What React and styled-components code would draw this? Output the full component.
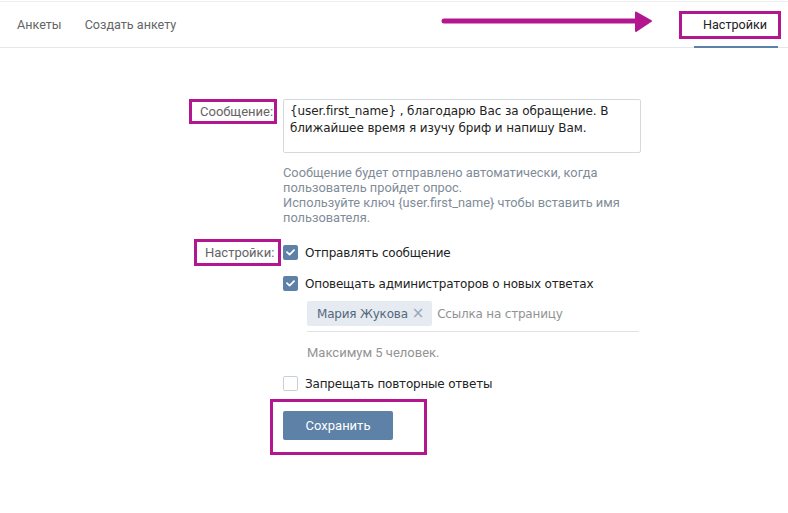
import React from 'react';
import styled, { createGlobalStyle } from 'styled-components';

const GlobalStyle = createGlobalStyle`
  body {
    margin: 0;
    background: #fff;
    font-family: Roboto, "Noto Sans", sans-serif;
    font-size: 13px;
  }
`;

const Page = styled.div`
  position: relative;
  width: 788px;
  height: 513px;
  background: #fff;
  overflow: hidden;
`;

const Header = styled.div`
  margin-top: 1px;
  border-top: 1px solid #eceef1;
  height: 45px;
  border-bottom: 1px solid #e3e6ea;
  display: flex;
  align-items: stretch;
  padding-left: 17px;
  padding-right: 10px;
  font-size: 12.6px;
`;

const Tab = styled.div`
  display: flex;
  align-items: center;
  margin-right: 23px;
  color: ${p => (p.active ? '#222' : '#656565')};
  position: relative;
  ${p => p.active && `
    margin-left: auto;
    margin-right: 0;
    width: 84px;
    &::after {
      content: '';
      position: absolute;
      left: 0;
      right: 0;
      bottom: -1px;
      height: 2px;
      background: #5e81a8;
    }
  `}
`;

const Mark = styled.span`
  display: inline-flex;
  align-items: center;
  flex-shrink: 0;
  border: 3px solid #b3178f;
  box-sizing: border-box;
  height: ${p => p.h}px;
  width: ${p => p.w}px;
  padding-left: ${p => p.pl || 0}px;
  margin-left: ${p => p.ml || 0}px;
  margin-right: ${p => p.mr || 0}px;
`;

const Arrow = styled.svg`
  position: absolute;
  left: 440px;
  top: 10px;
`;

const Form = styled.div`
  display: flex;
  flex-direction: column;
  padding-top: 51px;
`;

const Row = styled.div`
  display: flex;
  align-items: flex-start;
  margin-top: ${p => p.mt || 0}px;
`;

const LabelCell = styled.div`
  width: 283px;
  display: flex;
  justify-content: flex-end;
  color: #656565;
  box-sizing: border-box;
`;

const Field = styled.div`
  display: flex;
  flex-direction: column;
  width: 358px;
`;

const MessageBox = styled.div`
  box-sizing: border-box;
  width: 358px;
  height: 54px;
  border: 1px solid #d3d9de;
  border-radius: 2px;
  padding: 3px 6px;
  color: #222;
  font-family: "DejaVu Sans", sans-serif;
  font-size: 12px;
  letter-spacing: -0.1px;
  line-height: 17px;
`;

const Hint = styled.div`
  margin-top: 12px;
  color: #818c99;
  line-height: 15px;
  font-size: 12.8px;
  span { display: block; }
`;

const CheckRow = styled.label`
  display: flex;
  align-items: center;
  height: 15px;
  margin-top: ${p => p.mt || 0}px;
  color: #222;
  font-family: "DejaVu Sans", sans-serif;
  font-size: 12px;
  letter-spacing: -0.2px;
`;

const Box = styled.span`
  width: 15px;
  height: 15px;
  box-sizing: border-box;
  border-radius: 2px;
  margin-right: 7px;
  display: inline-flex;
  align-items: center;
  justify-content: center;
  flex-shrink: 0;
  background: ${p => (p.checked ? '#5e81a8' : '#fff')};
  border: ${p => (p.checked ? 'none' : '1px solid #c5d0db')};
`;

const Admins = styled.div`
  margin-left: 24px;
  margin-top: 10px;
  width: 332px;
`;

const TokenInput = styled.div`
  display: flex;
  align-items: flex-start;
  height: 30px;
  border-bottom: 1px solid #dfe2e8;
`;

const Chip = styled.span`
  display: inline-flex;
  align-items: center;
  height: 25px;
  padding: 0 8px 0 10px;
  background: #e5ebf1;
  border-radius: 2px;
  color: #55677d;
  font-family: "DejaVu Sans", sans-serif;
  font-size: 12px;
  letter-spacing: -0.2px;
`;

const Remove = styled.span`
  color: #99a6b4;
  margin-left: 4px;
  font-size: 15px;
  line-height: 1;
`;

const Placeholder = styled.span`
  height: 25px;
  display: inline-flex;
  align-items: center;
  margin-left: 5px;
  color: #929292;
  font-family: "DejaVu Sans", sans-serif;
  font-size: 12px;
  letter-spacing: -0.2px;
`;

const Note = styled.div`
  color: #939393;
  margin-top: 13px;
  line-height: 15px;
`;

const SaveWrap = styled.div`
  margin: 8px 0 0 270px;
`;

const SaveMark = styled.div`
  width: 157px;
  height: 56px;
  box-sizing: border-box;
  border: 3px solid #b3178f;
  padding: 9px 0 0 10px;
`;

const Button = styled.button`
  width: 110px;
  height: 29px;
  border: none;
  border-radius: 2px;
  background: #5e81a8;
  color: #fff;
  font-family: Roboto, sans-serif;
  font-size: 13px;
  padding: 0;
`;

const Check = () => (
  <svg width="9" height="7" viewBox="0 0 9 7">
    <path d="M1 3.2 L3.6 5.6 L8 1.2" fill="none" stroke="#fff" strokeWidth="1.8" strokeLinecap="round" strokeLinejoin="round" />
  </svg>
);

export default function App() {
  return (
    <Page>
      <GlobalStyle />
      <Header>
        <Tab>Анкеты</Tab>
        <Tab>Создать анкету</Tab>
        <Tab active>
          <Mark w={102} h={28} ml={-15} pl={21}>Настройки</Mark>
        </Tab>
      </Header>
      <Arrow width="215" height="26" viewBox="0 0 215 26">
        <path d="M4 11 L198 11" stroke="#b3178f" strokeWidth="5" strokeLinecap="round" />
        <path d="M196 2.5 L211 11 L196 21 Z" fill="#b3178f" stroke="#b3178f" strokeWidth="2" strokeLinejoin="round" />
      </Arrow>
      <Form>
        <Row>
          <LabelCell>
            <Mark w={88} h={25} pl={8} mr={6}>Сообщение:</Mark>
          </LabelCell>
          <Field>
            <MessageBox>
              {'{user.first_name} , благодарю Вас за обращение. В ближайшее время я изучу бриф и напишу Вам.'}
            </MessageBox>
            <Hint>
              <span>Сообщение будет отправлено автоматически, когда</span>
              <span>пользователь пройдет опрос.</span>
              <span>{'Используйте ключ {user.first_name} чтобы вставить имя'}</span>
              <span>пользователя.</span>
            </Hint>
          </Field>
        </Row>
        <Row mt={14}>
          <LabelCell>
            <Mark w={87} h={27} pl={8} mr={2}>Настройки:</Mark>
          </LabelCell>
          <Field>
            <CheckRow mt={6}>
              <Box checked><Check /></Box>
              Отправлять сообщение
            </CheckRow>
            <CheckRow mt={16}>
              <Box checked><Check /></Box>
              Оповещать администраторов о новых ответах
            </CheckRow>
            <Admins>
              <TokenInput>
                <Chip>Мария Жукова<Remove>×</Remove></Chip>
                <Placeholder>Ссылка на страницу</Placeholder>
              </TokenInput>
              <Note>Максимум 5 человек.</Note>
            </Admins>
            <CheckRow mt={16}>
              <Box />
              Запрещать повторные ответы
            </CheckRow>
          </Field>
        </Row>
        <SaveWrap>
          <SaveMark>
            <Button>Сохранить</Button>
          </SaveMark>
        </SaveWrap>
      </Form>
    </Page>
  );
}
